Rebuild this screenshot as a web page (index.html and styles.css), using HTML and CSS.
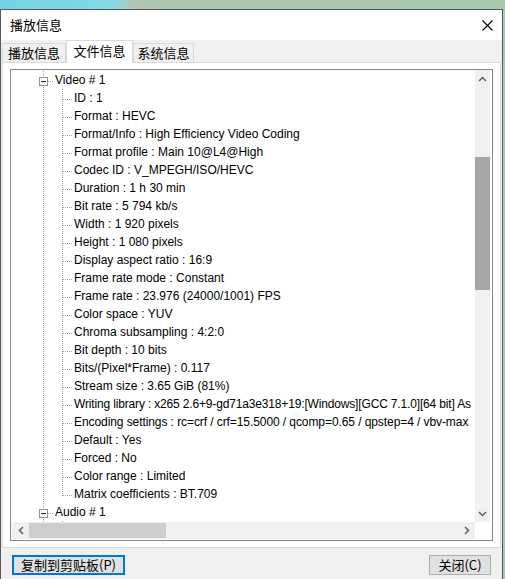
FILE: index.html
```html
<!DOCTYPE html>
<html lang="zh-CN">
<head>
<meta charset="utf-8">
<title>播放信息</title>
<link rel="stylesheet" href="styles.css">
</head>
<body>
<div class="window">
  <div class="titlebar">
    <span class="title">播放信息</span>
    <svg class="close" width="11" height="11" viewBox="0 0 11 11"><path d="M0.5 0.5 L10.5 10.5 M10.5 0.5 L0.5 10.5" stroke="#000" stroke-width="1.1" fill="none"/></svg>
  </div>
  <div class="client">
    <div class="tabs">
      <div class="tab t1">播放信息</div>
      <div class="tab sel t2">文件信息</div>
      <div class="tab t3">系统信息</div>
    </div>
    <div class="pane">
      <div class="tree">
        <div class="content">
          <div class="row"><span class="g node"><span class="box"></span></span><span class="t">Video # 1</span></div>
          <div class="row"><span class="g pass"></span><span class="g tee"></span><span class="t">ID : 1</span></div>
          <div class="row"><span class="g pass"></span><span class="g tee"></span><span class="t">Format : HEVC</span></div>
          <div class="row"><span class="g pass"></span><span class="g tee"></span><span class="t">Format/Info : High Efficiency Video Coding</span></div>
          <div class="row"><span class="g pass"></span><span class="g tee"></span><span class="t">Format profile : Main 10@L4@High</span></div>
          <div class="row"><span class="g pass"></span><span class="g tee"></span><span class="t">Codec ID : V_MPEGH/ISO/HEVC</span></div>
          <div class="row"><span class="g pass"></span><span class="g tee"></span><span class="t">Duration : 1 h 30 min</span></div>
          <div class="row"><span class="g pass"></span><span class="g tee"></span><span class="t">Bit rate : 5 794 kb/s</span></div>
          <div class="row"><span class="g pass"></span><span class="g tee"></span><span class="t">Width : 1 920 pixels</span></div>
          <div class="row"><span class="g pass"></span><span class="g tee"></span><span class="t">Height : 1 080 pixels</span></div>
          <div class="row"><span class="g pass"></span><span class="g tee"></span><span class="t">Display aspect ratio : 16:9</span></div>
          <div class="row"><span class="g pass"></span><span class="g tee"></span><span class="t">Frame rate mode : Constant</span></div>
          <div class="row"><span class="g pass"></span><span class="g tee"></span><span class="t">Frame rate : 23.976 (24000/1001) FPS</span></div>
          <div class="row"><span class="g pass"></span><span class="g tee"></span><span class="t">Color space : YUV</span></div>
          <div class="row"><span class="g pass"></span><span class="g tee"></span><span class="t">Chroma subsampling : 4:2:0</span></div>
          <div class="row"><span class="g pass"></span><span class="g tee"></span><span class="t">Bit depth : 10 bits</span></div>
          <div class="row"><span class="g pass"></span><span class="g tee"></span><span class="t">Bits/(Pixel*Frame) : 0.117</span></div>
          <div class="row"><span class="g pass"></span><span class="g tee"></span><span class="t">Stream size : 3.65 GiB (81%)</span></div>
          <div class="row"><span class="g pass"></span><span class="g tee"></span><span class="t tighter">Writing library : x265 2.6+9-gd71a3e318+19:[Windows][GCC 7.1.0][64 bit] As</span></div>
          <div class="row"><span class="g pass"></span><span class="g tee"></span><span class="t tight">Encoding settings : rc=crf / crf=15.5000 / qcomp=0.65 / qpstep=4 / vbv-max</span></div>
          <div class="row"><span class="g pass"></span><span class="g tee"></span><span class="t">Default : Yes</span></div>
          <div class="row"><span class="g pass"></span><span class="g tee"></span><span class="t">Forced : No</span></div>
          <div class="row"><span class="g pass"></span><span class="g tee"></span><span class="t">Color range : Limited</span></div>
          <div class="row"><span class="g pass"></span><span class="g ell"></span><span class="t">Matrix coefficients : BT.709</span></div>
          <div class="row"><span class="g node"><span class="box"></span></span><span class="t">Audio # 1</span></div>
          <div class="row"><span class="g pass"></span><span class="g tee"></span><span class="t"></span></div>
        </div>
        <div class="vscroll">
          <div class="arrow"><svg width="9" height="6" viewBox="0 0 9 6"><polyline points="1,5 4.5,1.5 8,5" fill="none" stroke="#606060" stroke-width="1.5"/></svg></div>
          <div class="vthumb"></div>
          <div class="fill"></div>
          <div class="arrow"><svg width="9" height="6" viewBox="0 0 9 6"><polyline points="1,1 4.5,4.5 8,1" fill="none" stroke="#606060" stroke-width="1.5"/></svg></div>
        </div>
        <div class="hscroll">
          <div class="harrow"><svg width="6" height="9" viewBox="0 0 6 9"><polyline points="5,1 1.5,4.5 5,8" fill="none" stroke="#606060" stroke-width="1.5"/></svg></div>
          <div class="hthumb"></div>
          <div class="fill"></div>
          <div class="harrow"><svg width="6" height="9" viewBox="0 0 6 9"><polyline points="1,1 4.5,4.5 1,8" fill="none" stroke="#606060" stroke-width="1.5"/></svg></div>
        </div>
        <div class="corner"></div>
      </div>
    </div>
    <div class="buttons">
      <button class="btn focus">复制到剪贴板(P)</button>
      <button class="btn">关闭(C)</button>
    </div>
  </div>
</div>
</body>
</html>
```
FILE: styles.css
```css
html, body {
  margin: 0;
  padding: 0;
}
body {
  width: 505px;
  height: 579px;
  overflow: hidden;
  background: linear-gradient(to right, #74d2e4 0px, #84d8e4 110px, #b4c6b4 135px, #a9c7ad 160px, #a8c8ae 505px);
  font-family: "Noto Sans CJK SC", "Liberation Sans", sans-serif;
}
.window {
  margin-top: 9px;
  width: 501px;
  height: 569px;
  border: 1px solid #4e5c5a;
  border-bottom: none;
  display: flex;
  flex-direction: column;
  background: #f0f0f0;
}
.titlebar {
  height: 30px;
  flex: none;
  background: #fff;
  display: flex;
  align-items: center;
  justify-content: space-between;
  padding: 0 9px 0 9px;
}
.title {
  font-size: 13px;
  color: #000;
  line-height: 16px;
  padding-bottom: 1px;
}
.close {
  display: block;
  margin-right: 0;
}
.client {
  flex: 1;
  display: flex;
  flex-direction: column;
  background: #f0f0f0;
}
.tabs {
  height: 22px;
  flex: none;
  display: flex;
  align-items: flex-end;
  padding-left: 1px;
}
.tab {
  box-sizing: border-box;
  height: 19px;
  border: 1px solid #d9d9d9;
  border-bottom: none;
  background: #f0f0f0;
  font-size: 13px;
  line-height: 17px;
  text-align: center;
  color: #000;
}
.t1 { width: 64px; }
.t2 { width: 67px; }
.t3 { width: 61px; }
.tab.sel {
  height: 23px;
  margin-bottom: -1px;
  background: #fff;
  position: relative;
  z-index: 1;
  line-height: 19px;
}
.pane {
  margin: 0 1px;
  height: 486px;
  box-sizing: border-box;
  border: 1px solid #d9d9d9;
  background: #fff;
  padding: 6px 7px;
}
.tree {
  box-sizing: border-box;
  width: 483px;
  height: 472px;
  border: 1px solid #828790;
  background: #fff;
  display: grid;
  grid-template-columns: 464px 17px;
  grid-template-rows: 452px 18px;
}
.content {
  overflow: hidden;
  padding: 1px 0 0 23px;
  font-family: "Liberation Sans", Arial, sans-serif;
  font-size: 12px;
  color: #000;
  white-space: nowrap;
}
.row {
  height: 18px;
  display: flex;
}
.t {
  line-height: 18px;
  padding-left: 2px;
}
.t.tight {
  letter-spacing: -0.08px;
}
.t.tighter {
  letter-spacing: -0.16px;
}
.g {
  flex: none;
  width: 19px;
  height: 18px;
  display: flex;
  justify-content: center;
  align-items: flex-start;
}
.pass {
  background: repeating-linear-gradient(to bottom, #a0a0a0 0 1px, transparent 1px 2px) 9px 0 / 1px 18px no-repeat;
}
.tee {
  background:
    repeating-linear-gradient(to bottom, #a0a0a0 0 1px, transparent 1px 2px) 9px 0 / 1px 18px no-repeat,
    repeating-linear-gradient(to right, #a0a0a0 0 1px, transparent 1px 2px) 10px 10px / 9px 1px no-repeat;
}
.ell {
  background:
    repeating-linear-gradient(to bottom, #a0a0a0 0 1px, transparent 1px 2px) 9px 0 / 1px 11px no-repeat,
    repeating-linear-gradient(to right, #a0a0a0 0 1px, transparent 1px 2px) 10px 10px / 9px 1px no-repeat;
}
.node {
  background:
    repeating-linear-gradient(to bottom, #a0a0a0 0 1px, transparent 1px 2px) 9px 0 / 1px 18px no-repeat,
    repeating-linear-gradient(to right, #a0a0a0 0 1px, transparent 1px 2px) 14px 10px / 5px 1px no-repeat;
}
.box {
  box-sizing: border-box;
  width: 9px;
  height: 9px;
  margin-top: 6px;
  border: 1px solid #919191;
  background: #fff linear-gradient(#1e1e1e, #1e1e1e) 1px 3px / 5px 1px no-repeat;
}
.vscroll {
  width: 15px;
  background: #f0f0f0;
  display: flex;
  flex-direction: column;
}
.arrow {
  height: 17px;
  flex: none;
  display: flex;
  align-items: center;
  justify-content: center;
}
.vthumb {
  flex: none;
  height: 133px;
  margin-top: 70px;
  background: #a6a6a6;
}
.fill { flex: 1; }
.hscroll {
  height: 17px;
  margin-left: 1px;
  background: #f0f0f0;
  display: flex;
}
.harrow {
  width: 17px;
  flex: none;
  display: flex;
  align-items: center;
  justify-content: center;
}
.hthumb {
  flex: none;
  width: 137px;
  height: 15px;
  margin-top: 1px;
  background: #cdcdcd;
}
.corner {
  background: #fff;
}
.buttons {
  display: flex;
  justify-content: space-between;
  padding: 7px 11px 0 11px;
}
.btn {
  box-sizing: border-box;
  height: 20px;
  margin: 0;
  padding: 0;
  background: #e1e1e1;
  border: 1px solid #adadad;
  border-radius: 0;
  font-family: "Noto Sans CJK SC", "Liberation Sans", sans-serif;
  font-size: 13px;
  line-height: 16px;
  color: #000;
  width: 62px;
}
.btn.focus {
  width: 113px;
  border: 2px solid #0078d7;
}
```
